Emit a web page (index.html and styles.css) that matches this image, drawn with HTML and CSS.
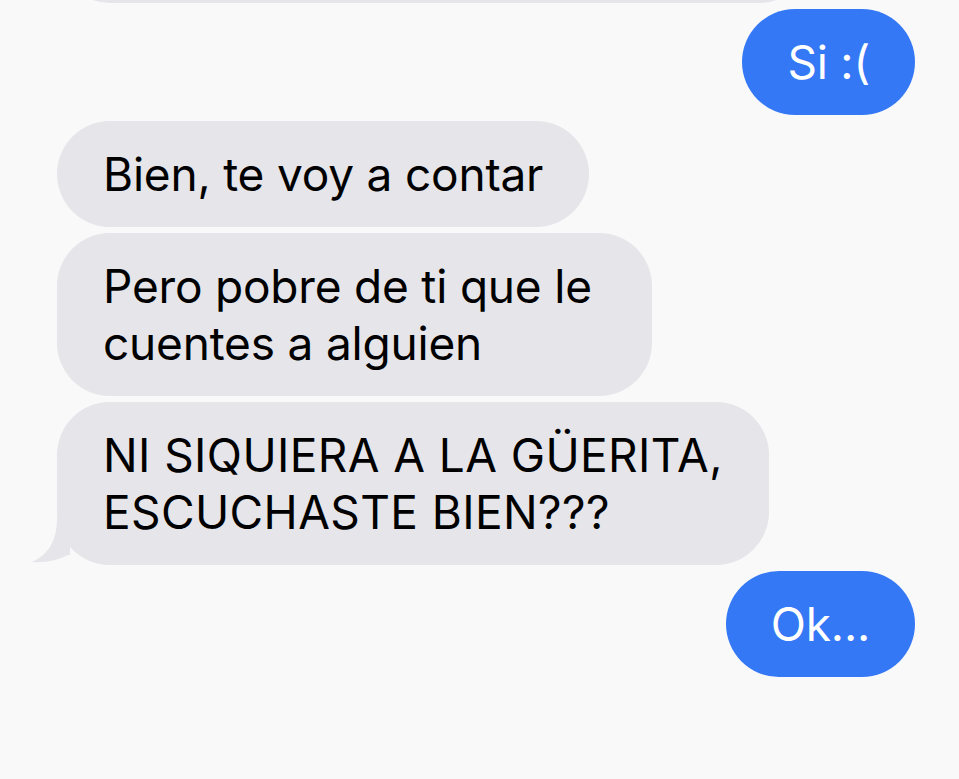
FILE: index.html
```html
<!DOCTYPE html>
<html lang="es">
<head>
    <meta charset="UTF-8">
    <meta name="viewport" content="width=device-width, initial-scale=1.0">
    <title>Mensajes</title>
    <link rel="stylesheet" href="styles.css">
</head>
<body>
    <div class="thread">
        <div class="bubble received cut">&nbsp;</div>

        <div class="bubble sent">Si :(</div>

        <div class="bubble received">Bien, te voy a contar</div>
        <div class="bubble received wide">Pero pobre de ti que le<br>cuentes a alguien</div>
        <div class="bubble received caps">
            NI SIQUIERA A LA GÜERITA,<br>ESCUCHASTE BIEN???
            <svg class="tail" width="40" height="46" viewBox="0 0 40 46">
                <path d="M27 0 C27 22 18 36 2 43 C16 44 28 41 38 36 L40 36 L40 0 Z" fill="#e5e5ea"/>
            </svg>
        </div>

        <div class="bubble sent">Ok...</div>
    </div>
</body>
</html>
```

FILE: styles.css
```css
body, html {
    margin: 0;
    height: 100%;
    background: #f9f9f9;
    overflow: hidden;
}

.thread {
    display: flex;
    flex-direction: column;
    gap: 6px;
    padding: 0 44px 0 57px;
    font-family: Inter, "Liberation Sans", sans-serif;
    font-size: 46px;
    line-height: 57px;
    letter-spacing: -0.2px;
}

.bubble {
    position: relative;
    padding: 24.5px 46px;
    border-radius: 53px;
    white-space: nowrap;
}

.received {
    align-self: flex-start;
    background: #e5e5ea;
    color: #000;
}

.sent {
    align-self: flex-end;
    background: #3478f6;
    color: #fff;
    padding: 24.5px 45px;
}

.cut {
    width: 663px;
    margin-top: -103px;
}

.wide {
    padding-right: 60px;
}

.caps {
    letter-spacing: 0.4px;
}

.tail {
    position: absolute;
    left: -27px;
    bottom: 0;
}
```
